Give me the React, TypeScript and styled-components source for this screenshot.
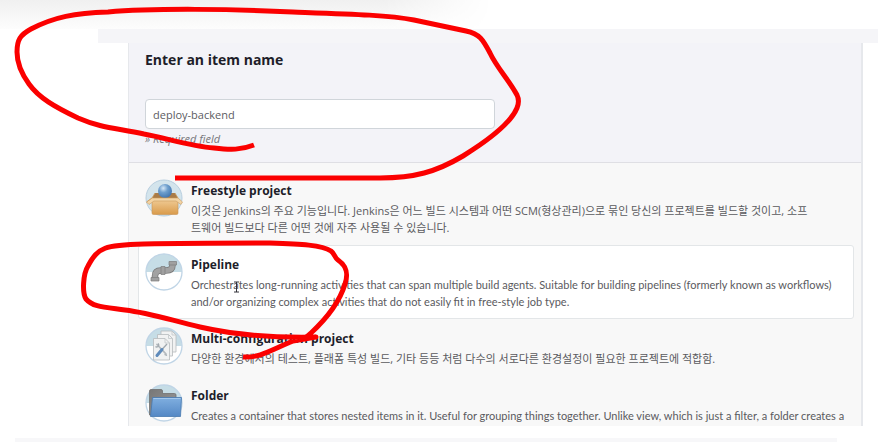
import React, { useState } from "react";
import styled, { createGlobalStyle } from "styled-components";

const GlobalStyle = createGlobalStyle`
  *, *::before, *::after { box-sizing: border-box; }
  body {
    margin: 0;
    background: #ffffff;
    color: #1e1e2a;
    font-family: "Open Sans", "Noto Sans CJK KR", sans-serif;
    font-size: 11px;
    line-height: 17px;
  }
`;

const Page = styled.div`
  position: relative;
  display: flex;
  flex-direction: column;
  overflow: hidden;
`;

const TopShade = styled.div`
  height: 29px;
  margin-right: 44%;
  background: linear-gradient(to bottom, #f0f0f0, #fdfdfd);
  mask-image: linear-gradient(to right, #000 78%, transparent);
`;

const Strip = styled.div`
  height: 14px;
  margin-left: 98px;
  background: #f5f5f8;
`;

const Panel = styled.main`
  margin: 0 15px 0 128px;
  border: solid #e6e8ec;
  border-width: 0 2px 0 1px;
  background: #f8f8f8;
`;

const NameSection = styled.section`
  display: flex;
  flex-direction: column;
  align-items: flex-start;
  padding: 7px 16px 15px;
  border-bottom: 1px solid #dfdfe4;
  background: #f3f3f8;
`;

const NameLabel = styled.label`
  font-size: 14px;
  font-weight: 700;
  line-height: 20px;
`;

const NameInput = styled.input`
  width: 50%;
  height: 30px;
  margin: 29px 0 1px;
  padding: 0 7px;
  border: 1px solid #d0d5da;
  border-radius: 4px;
  background: #ffffff;
  color: #5c5c62;
  font: inherit;
  outline: none;
`;

const Hint = styled.p`
  margin: 0;
  color: #77777c;
  font-style: italic;
`;

const TypeList = styled.ul`
  margin: 0;
  padding: 8px 7px 0 9px;
  list-style: none;
`;

const TypeItem = styled.li<{ $selected: boolean }>`
  border: 1px solid ${(p) => (p.$selected ? "#e3e6e8" : "transparent")};
  border-radius: 3px;
  background: ${(p) => (p.$selected ? "#ffffff" : "transparent")};
`;

const TypeLabel = styled.label<{ $last: boolean }>`
  display: flex;
  gap: 8px;
  padding: 7px 7px ${(p) => (p.$last ? 1 : 8)}px 6px;
  cursor: pointer;
`;

const HiddenRadio = styled.input`
  position: absolute;
  opacity: 0;
  pointer-events: none;
`;

const IconBox = styled.svg`
  flex: none;
  width: 38px;
  height: 38px;
`;

const TypeText = styled.span`
  display: flex;
  flex-direction: column;
  gap: 2px;
  min-width: 0;
  padding-top: 3px;
`;

const TypeName = styled.span`
  font-size: 12px;
  font-weight: 700;
  line-height: 18px;
`;

const TypeDescription = styled.span`
  color: #5a5a5e;
  font-family: Lato, "Open Sans", sans-serif;

  &:lang(ko) {
    font-family: "Open Sans", "Noto Sans CJK KR", sans-serif;
    white-space: pre-line;
  }
`;

const BottomStrip = styled.div`
  height: 4px;
  margin: 12px 41px 0 15px;
  background: #f7f7f9;
`;

const Ink = styled.svg`
  position: absolute;
  top: 0;
  left: 0;
  width: 530px;
  height: 370px;
  pointer-events: none;
`;

const Cursor = styled.svg`
  position: absolute;
  top: 281px;
  left: 232px;
  width: 9px;
  height: 12px;
  pointer-events: none;
`;

function Badge({ id, children }: { id: string; children: React.ReactNode }) {
  return (
    <IconBox viewBox="0 0 38 38" aria-hidden="true">
      <defs>
        <clipPath id={`${id}-disc`}>
          <circle cx="19" cy="19" r="18" />
        </clipPath>
      </defs>
      <circle cx="19" cy="19" r="18" fill="#fff" />
      <rect width="38" height="19" fill="#c6dde6" clipPath={`url(#${id}-disc)`} />
      <circle cx="19" cy="19" r="18" fill="none" stroke="#c0d5e6" strokeWidth="1.3" />
      {children}
    </IconBox>
  );
}

const FreestyleIcon = () => (
  <IconBox viewBox="0 0 38 38" aria-hidden="true">
    <defs>
      <radialGradient id="ball" cx="0.38" cy="0.3" r="0.7">
        <stop offset="0" stopColor="#d5e7f6" />
        <stop offset="0.45" stopColor="#6f9fcd" />
        <stop offset="1" stopColor="#4477b0" />
      </radialGradient>
      <linearGradient id="carton" x1="0" y1="0" x2="0" y2="1">
        <stop offset="0" stopColor="#f1cd98" />
        <stop offset="1" stopColor="#d99b4b" />
      </linearGradient>
    </defs>
    <circle cx="19" cy="19" r="18" fill="#d3e4ec" stroke="#b9cfdf" />
    <path d="M7 19 10 14H30L33 19Z" fill="#a97b47" />
    <circle cx="20" cy="12" r="7" fill="url(#ball)" />
    <path d="M7 20H33V34Q33 35.500 31.500 35.500H8.500Q7 35.500 7 34Z" fill="url(#carton)" stroke="#c99455" strokeWidth=".6" />
    <path d="M7 19H33L37.500 23 36 25.500 31 22H9L4 25.500 1.500 23Z" fill="#f3d4a4" stroke="#c99a60" strokeWidth=".6" />
    <path d="M10 14 7 19 1.500 23M30 14 33 19" fill="none" stroke="#cf9f62" strokeWidth=".8" />
  </IconBox>
);

const PipelineIcon = () => (
  <Badge id="pipeline">
    <path d="M10 26V23Q10 17.500 16 17.500H21Q27.500 17.500 27.500 12V11" fill="none" stroke="#777777" strokeWidth="6.500" />
    <path d="M10 25V23Q10 17.500 16 17.500H21Q27.500 17.500 27.500 12V11" fill="none" stroke="#a2a2a2" strokeWidth="5" />
    <path d="M6 24.500H14V28H6ZM24 8.500H31.500V12H24ZM16 13.500H20V21.500H16Z" fill="#a0a0a0" stroke="#7c7c7c" strokeWidth=".7" />
  </Badge>
);

const MultiIcon = () => (
  <Badge id="multi">
    <g fill="#f1f2f2" stroke="#b6babc" strokeWidth=".8">
      <path d="M16 4H27L31 8V25H16Z" />
      <path d="M12.500 7.500H23.500L27.500 11.500V29H12.500Z" />
      <path d="M8.500 11.500H20L24.500 16V33H8.500Z" />
    </g>
    <path d="M20 11.500V16H24.500M23.500 7.500V11.500H27.500M27 4V8H31" fill="none" stroke="#c3c7c9" strokeWidth=".8" />
    <path d="M12 17.500 21 27" stroke="#b4babe" strokeWidth="1.800" strokeLinecap="round" />
    <path d="M10.500 19.500Q11.500 20.500 13 19.500T13 16.500M19.500 27.500 22 28.500" fill="none" stroke="#a3abb0" strokeWidth="1.300" />
    <path d="M22 17 16.500 23" stroke="#a0a8ae" strokeWidth="1.300" />
    <path d="M17 22.500 12 28.500" stroke="#5f8bbb" strokeWidth="3" strokeLinecap="round" />
  </Badge>
);

const FolderIcon = () => (
  <Badge id="folder">
    <defs>
      <linearGradient id="folder-front" x1="0" y1="0" x2="0" y2="1">
        <stop offset="0" stopColor="#80afe0" />
        <stop offset="1" stopColor="#5488c5" />
      </linearGradient>
      <linearGradient id="folder-back" x1="0" y1="0" x2="1" y2="1">
        <stop offset="0" stopColor="#777777" />
        <stop offset="1" stopColor="#9b9b9b" />
      </linearGradient>
    </defs>
    <path d="M4.500 31V7Q4.500 5.500 6 5.500H16Q17.500 5.500 17.500 7V9.500H29.500Q31 9.500 31 11V31Z" fill="url(#folder-back)" stroke="#707070" strokeWidth=".8" />
    <path d="M7.500 13.500H36.500L35.500 32.500H5.500Z" fill="url(#folder-front)" stroke="#4878ae" strokeWidth=".8" />
    <path d="M8.500 14.500H35.500" stroke="#a4c8ec" />
  </Badge>
);

const itemTypes = [
  {
    name: "Freestyle project",
    lang: "ko",
    Icon: FreestyleIcon,
    description:
      "이것은 Jenkins의 주요 기능입니다. Jenkins은 어느 빌드 시스템과 어떤 SCM(형상관리)으로 묶인 당신의 프로젝트를 빌드할 것이고, 소프\n트웨어 빌드보다 다른 어떤 것에 자주 사용될 수 있습니다.",
  },
  {
    name: "Pipeline",
    lang: "en",
    Icon: PipelineIcon,
    description:
      "Orchestrates long-running activities that can span multiple build agents. Suitable for building pipelines (formerly known as workflows) and/or organizing complex activities that do not easily fit in free-style job type.",
  },
  {
    name: "Multi-configuration project",
    lang: "ko",
    Icon: MultiIcon,
    description:
      "다양한 환경에서의 테스트, 플래폼 특성 빌드, 기타 등등 처럼 다수의 서로다른 환경설정이 필요한 프로젝트에 적합함.",
  },
  {
    name: "Folder",
    lang: "en",
    Icon: FolderIcon,
    description:
      "Creates a container that stores nested items in it. Useful for grouping things together. Unlike view, which is just a filter, a folder creates a",
  },
];

export default function App() {
  const [itemName, setItemName] = useState("deploy-backend");
  const [selected, setSelected] = useState("Pipeline");

  return (
    <Page>
      <GlobalStyle />
      <TopShade />
      <Strip />
      <Panel>
        <NameSection>
          <NameLabel htmlFor="item-name">Enter an item name</NameLabel>
          <NameInput id="item-name" value={itemName} onChange={(e) => setItemName(e.target.value)} />
          <Hint>» Required field</Hint>
        </NameSection>
        <TypeList>
          {itemTypes.map(({ name, lang, Icon, description }, index) => (
            <TypeItem key={name} $selected={name === selected}>
              <TypeLabel $last={index === itemTypes.length - 1}>
                <HiddenRadio type="radio" name="item-type" checked={name === selected} onChange={() => setSelected(name)} />
                <Icon />
                <TypeText>
                  <TypeName>{name}</TypeName>
                  <TypeDescription lang={lang}>{description}</TypeDescription>
                </TypeText>
              </TypeLabel>
            </TypeItem>
          ))}
        </TypeList>
      </Panel>
      <BottomStrip />
      <Cursor viewBox="0 0 9 12" aria-hidden="true">
        <path d="M2 1H7M4.500 1V11M2 11H7" fill="none" stroke="#33333a" />
      </Cursor>
      <Ink viewBox="0 0 530 370" fill="none" stroke="#fb0000" strokeWidth="5" strokeLinejoin="round" aria-hidden="true">
        <path d="M254 145C241 150 231 150 214 148C190 146 166 138 144 134C116 128 101 128 78 118C55 107 39 98 29 84C21 73 17 62 17 52C17 40 20 35 31 29C54 17 75 13 108 12C152 8 235 9 293 12C350 14 388 15 414 20L466 31C480 34 483 40 490 53C497 68 509 80 517 95C519 99 519 103 517 108C510 125 484 143 463 156C436 172 414 178 380 178H175" />
        <path d="M243 357C260 358 271 350 293 341L316 337C270 338 235 335 200 327C170 320 150 313 125 310C103 307 93 307 86 299C82 293 83 274 88 266C98 247 105 245 144 244C190 243 235 243 270 243C301 244 322 245 331 251C335 254 334 257 338 260C348 267 348 275 345 284C339 304 325 320 311 333C304 340 301 339 293 341" />
      </Ink>
    </Page>
  );
}
